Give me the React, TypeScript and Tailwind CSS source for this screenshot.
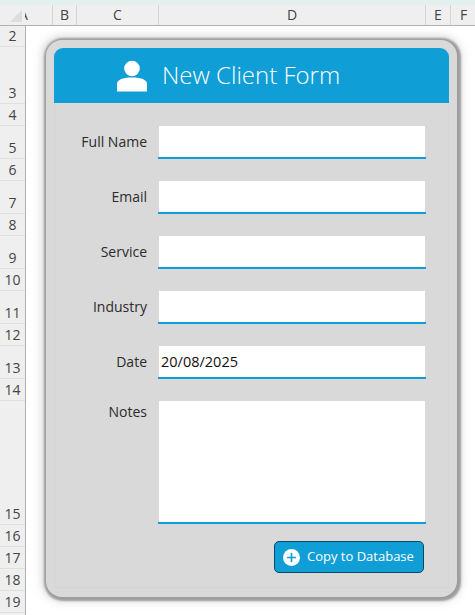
import { Plus } from "lucide-react";

const font = "font-['Open_Sans','Liberation_Sans',sans-serif]";

const columns = [
  { label: "B", width: "w-[24px]" },
  { label: "C", width: "w-[82px]" },
  { label: "D", width: "w-[267px]" },
  { label: "E", width: "w-[25px]" },
  { label: "F", width: "w-[25px]" },
];

const rows = [
  { label: "2", height: "h-[21px]" },
  { label: "3", height: "h-[57px]" },
  { label: "4", height: "h-[22px]" },
  { label: "5", height: "h-[33px]" },
  { label: "6", height: "h-[22px]" },
  { label: "7", height: "h-[33px]" },
  { label: "8", height: "h-[22px]" },
  { label: "9", height: "h-[33px]" },
  { label: "10", height: "h-[22px]" },
  { label: "11", height: "h-[33px]" },
  { label: "12", height: "h-[22px]" },
  { label: "13", height: "h-[33px]" },
  { label: "14", height: "h-[22px]" },
  { label: "15", height: "h-[124px]" },
  { label: "16", height: "h-[22px]" },
  { label: "17", height: "h-[22px]" },
  { label: "18", height: "h-[22px]" },
  { label: "19", height: "h-[22px]" },
];

const fields = [
  { label: "Full Name", value: "" },
  { label: "Email", value: "" },
  { label: "Service", value: "" },
  { label: "Industry", value: "" },
  { label: "Date", value: "20/08/2025" },
];

function ColumnHeader() {
  return (
    <div className="flex h-[21px] border-b border-[#b1b1b1] bg-[#efefef] text-[14px] text-[#444]">
      <div className="relative z-10 w-[25px] shrink-0 bg-[#efefef]">
        <div className="absolute left-[10px] top-[5px] h-0 w-0 border-b-[12px] border-l-[12px] border-b-[#dcdcdc] border-l-transparent" />
      </div>
      <div className="w-[28px] shrink-0 overflow-hidden border-r border-[#d4d4d4] leading-[19px]">
        <span className="-ml-[6px] block">A</span>
      </div>
      {columns.map((col) => (
        <div
          key={col.label}
          className={`${col.width} shrink-0 border-r border-[#d4d4d4] text-center leading-[19px] last:border-r-0`}
        >
          {col.label}
        </div>
      ))}
    </div>
  );
}

function RowHeader() {
  return (
    <div className="w-[26px] shrink-0 overflow-hidden border-r border-[#b1b1b1] bg-[#efefef] text-[14px] text-[#444]">
      {rows.map((row) => (
        <div
          key={row.label}
          className={`${row.height} flex items-end justify-center border-b border-[#e0e0e0] pb-[1px] leading-[18px]`}
        >
          {row.label}
        </div>
      ))}
    </div>
  );
}

function ClientForm() {
  return (
    <div className="flex h-[557px] w-[411px] flex-col rounded-[16px] bg-[#d9d9d9] pb-[9px] pl-[8px] pr-[8px] pt-[8px] shadow-[1px_1px_2px_3px_rgba(150,150,150,0.9),0_0_8px_4px_rgba(180,180,180,0.5)]">
      <div className="flex h-[55px] shrink-0 items-center rounded-t-[9px] bg-[#0f9ed5] pl-[63px] text-white">
        <svg viewBox="0 0 30 32" className="h-[32px] w-[30px]" fill="currentColor">
          <circle cx="15" cy="8.5" r="7.8" />
          <path d="M0 31.5 V24 C0 20 5 17.5 15 17.5 C25 17.5 30 20 30 24 V31.5 Z" />
        </svg>
        <span className="ml-[15px] pb-[2px] text-[24px] font-light leading-none">New Client Form</span>
      </div>
      <div className="flex flex-1 flex-col border-b border-l border-r border-[#d5d5d5] pt-[23px]">
        {fields.map((field) => (
          <div key={field.label} className="mb-[22px] flex items-center">
            <div className="w-[92px] pb-[2px] text-right text-[14px] text-[#2b2b2b]">{field.label}</div>
            <div className="ml-[11px] flex h-[33px] w-[268px] border-b-2 border-[#0f9ed5]">
              <div className="mx-[1px] flex flex-1 items-center bg-white pl-[2px] text-[14.5px] text-[#111]">
                {field.value}
              </div>
            </div>
          </div>
        ))}
        <div className="flex">
          <div className="w-[92px] text-right text-[14px] text-[#2b2b2b]">Notes</div>
          <div className="ml-[11px] flex h-[123px] w-[268px] border-b-2 border-[#0f9ed5]">
            <div className="mx-[1px] flex-1 bg-white" />
          </div>
        </div>
        <div className="mt-[17px] flex justify-end pr-[24px]">
          <button
            type="button"
            className="flex h-[32px] w-[150px] items-center rounded-[5px] border border-[#0c4a66] bg-[#0f9ed5] pl-[8px] text-[13px] text-white"
          >
            <span className="flex h-[17px] w-[17px] items-center justify-center rounded-full bg-white">
              <Plus size={13} strokeWidth={3.2} className="text-[#0f9ed5]" />
            </span>
            <span className="ml-[7px]">Copy to Database</span>
          </button>
        </div>
      </div>
    </div>
  );
}

export default function App() {
  return (
    <div className={`${font} flex h-[615px] w-[475px] flex-col overflow-hidden bg-white`}>
      <div className="h-[5px] shrink-0 bg-[#e3f1ee]" />
      <ColumnHeader />
      <div className="flex min-h-0 flex-1">
        <RowHeader />
        <div className="flex-1 pl-[20px] pt-[14px]">
          <ClientForm />
        </div>
      </div>
    </div>
  );
}
